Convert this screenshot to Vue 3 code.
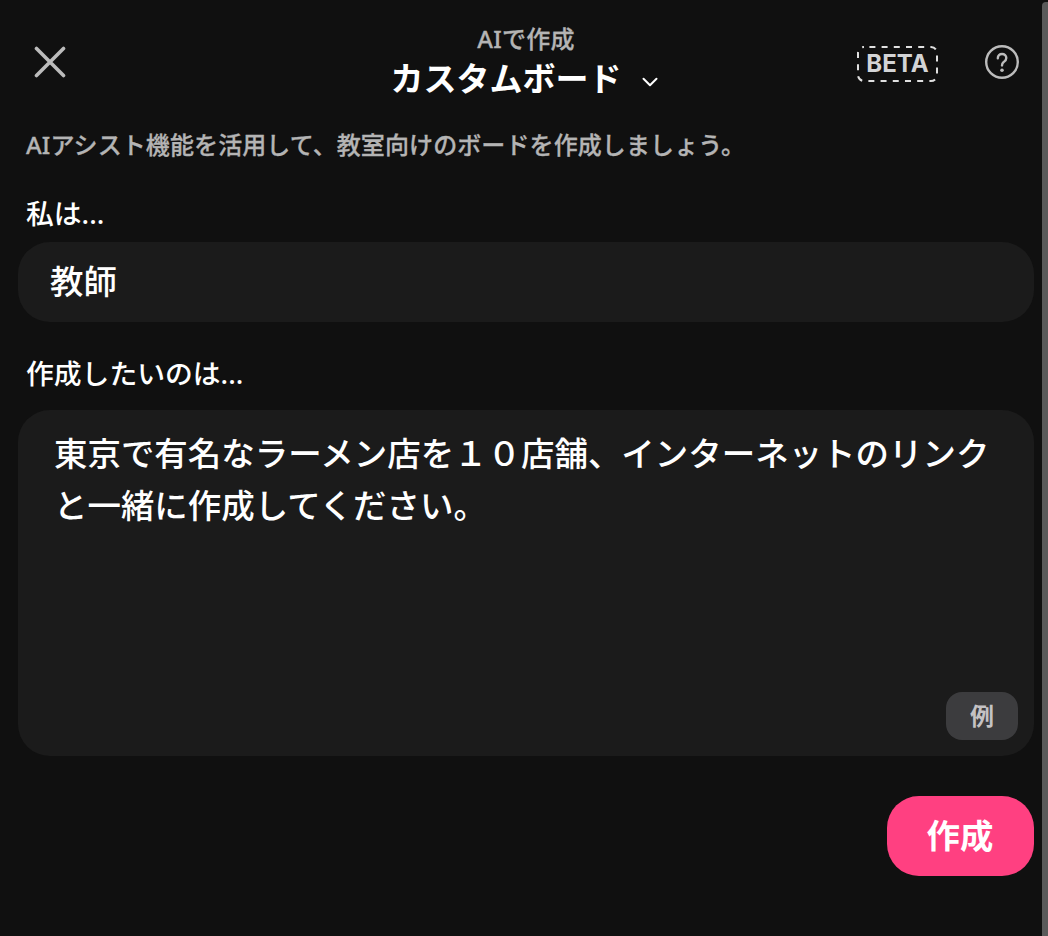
<template>
    <div class="page">
        <main class="panel">
            <header class="header">
                <button class="icon-btn close-btn" aria-label="閉じる">
                    <svg width="32" height="32" viewBox="0 0 32 32">
                        <path d="M2.5 2.5 29.5 29.5M29.5 2.5 2.5 29.5" />
                    </svg>
                </button>

                <div class="heading">
                    <span class="eyebrow">AIで作成</span>
                    <button class="title-btn">
                        <span class="title">{{ boardType }}</span>
                        <svg class="chevron" width="16" height="10" viewBox="0 0 16 10">
                            <path d="M1.5 1.8 8 8.2 14.5 1.8" />
                        </svg>
                    </button>
                </div>

                <div class="header-right">
                    <div class="beta">
                        <svg class="beta-border" width="81" height="36" viewBox="0 0 81 36">
                            <rect x="1" y="1" width="79" height="34" rx="6" />
                        </svg>
                        <span>BETA</span>
                    </div>
                    <button class="icon-btn help-btn" aria-label="ヘルプ">
                        <svg width="36" height="36" viewBox="0 0 36 36">
                            <circle cx="18" cy="18" r="15.8" />
                            <path d="M13.8 14.2C13.8 11.5 15.6 10 18 10C20.5 10 22.3 11.7 22.3 14C22.3 16.2 20.9 17.1 19.7 18C18.5 18.9 18 19.5 18 21.4" />
                            <circle class="dot" cx="18" cy="26.2" r="1.8" />
                        </svg>
                    </button>
                </div>
            </header>

            <p class="description">AIアシスト機能を活用して、教室向けのボードを作成しましょう。</p>

            <div class="label role-label">私は...</div>
            <div class="field role-field">{{ role }}</div>

            <div class="label prompt-label">作成したいのは...</div>
            <div class="field prompt-field">
                <p class="prompt-text">{{ prompt }}</p>
                <button class="example-btn">例</button>
            </div>

            <div class="actions">
                <button class="submit-btn">作成</button>
            </div>
        </main>
        <div class="scrollbar"></div>
    </div>
</template>

<script setup>
import { ref } from "vue";

const boardType = ref("カスタムボード");
const role = ref("教師");
const prompt = ref("東京で有名なラーメン店を１０店舗、インターネットのリンクと一緒に作成してください。");
</script>

<style>
body {
    margin: 0;
    background: #101010;
}
</style>

<style scoped>
.page {
    display: flex;
    height: 936px;
    overflow: hidden;
    background: #101010;
    color: #fff;
    font-family: "Noto Sans", "Noto Sans CJK JP", sans-serif;
    font-weight: 500;
}

.panel {
    flex: 1;
    min-width: 0;
    padding: 0 8px 0 18px;
    box-sizing: border-box;
}

button {
    padding: 0;
    border: 0;
    background: none;
    color: inherit;
    font: inherit;
    cursor: pointer;
}

svg {
    display: block;
    fill: none;
    stroke: #bcbcbc;
    stroke-linecap: round;
    stroke-linejoin: round;
}

.header {
    display: grid;
    grid-template-columns: 200px 1fr 200px;
    height: 124px;
}

.close-btn {
    align-self: start;
    width: 32px;
    margin: 46px 0 0 16px;
}

.close-btn svg {
    stroke-width: 3.6;
}

.heading {
    display: flex;
    flex-direction: column;
    align-items: center;
    padding-top: 24px;
}

.eyebrow {
    color: #b4b4b4;
    font-size: 24px;
    letter-spacing: 0.3px;
    line-height: 30px;
    -webkit-text-stroke: 0.3px #b4b4b4;
}

.title-btn {
    display: flex;
    align-items: center;
    gap: 20px;
    height: 50px;
    margin-right: 4px;
}

.title {
    font-size: 33px;
    font-weight: 700;
    line-height: 50px;
}

.chevron {
    margin-top: 5px;
    stroke: #fff;
    stroke-width: 2;
}

.header-right {
    display: flex;
    align-items: flex-start;
    justify-content: flex-end;
    gap: 46px;
    padding-right: 14px;
}

.beta {
    position: relative;
    width: 81px;
    height: 36px;
    margin-top: 46px;
    color: #d3d4d6;
    font-family: Inter, sans-serif;
    font-size: 24px;
    font-weight: 700;
    line-height: 36px;
    text-align: center;
}

.beta-border {
    position: absolute;
    inset: 0;
    stroke: #e0e0e0;
    stroke-width: 2;
    stroke-linecap: butt;
    stroke-dasharray: 6 6.2;
    stroke-dashoffset: 6.8;
}

.help-btn {
    margin-top: 44px;
}

.help-btn svg {
    stroke-width: 2.4;
}

.help-btn .dot {
    fill: #bcbcbc;
    stroke: none;
}

.description {
    margin: 0;
    padding-left: 8px;
    color: #b4b4b4;
    font-size: 24px;
    letter-spacing: 0.1px;
    line-height: 42px;
    -webkit-text-stroke: 0.3px #b4b4b4;
}

.label {
    padding-left: 8px;
    font-size: 27.8px;
    line-height: 40px;
}

.role-label {
    margin-top: 27px;
}

.field {
    box-sizing: border-box;
    border-radius: 32px;
    background: #1b1b1b;
    font-size: 33.46px;
}

.role-field {
    height: 80px;
    margin-top: 9px;
    padding-left: 32px;
    line-height: 78px;
}

.prompt-label {
    margin-top: 31px;
}

.prompt-field {
    display: flex;
    flex-direction: column;
    justify-content: space-between;
    height: 346px;
    margin-top: 17px;
    padding: 17px 16px 16px 36px;
}

.prompt-text {
    width: 950px;
    margin: 0;
    line-height: 52px;
}

.example-btn {
    align-self: flex-end;
    width: 72px;
    height: 48px;
    border-radius: 16px;
    background: #3c3c3e;
    color: #c4c2c4;
    font-size: 24px;
    font-weight: 700;
    line-height: 48px;
}

.actions {
    display: flex;
    justify-content: flex-end;
    margin-top: 40px;
}

.submit-btn {
    width: 147px;
    height: 80px;
    padding: 0 1px 2px 0;
    border-radius: 32px;
    background: #ff4081;
    font-size: 33.4px;
    font-weight: 700;
    line-height: 78px;
}

.scrollbar {
    width: 14px;
    height: 960px;
    margin: 2px -8px 0 0;
    border-radius: 4px;
    background: #5a5a5a;
}
</style>
